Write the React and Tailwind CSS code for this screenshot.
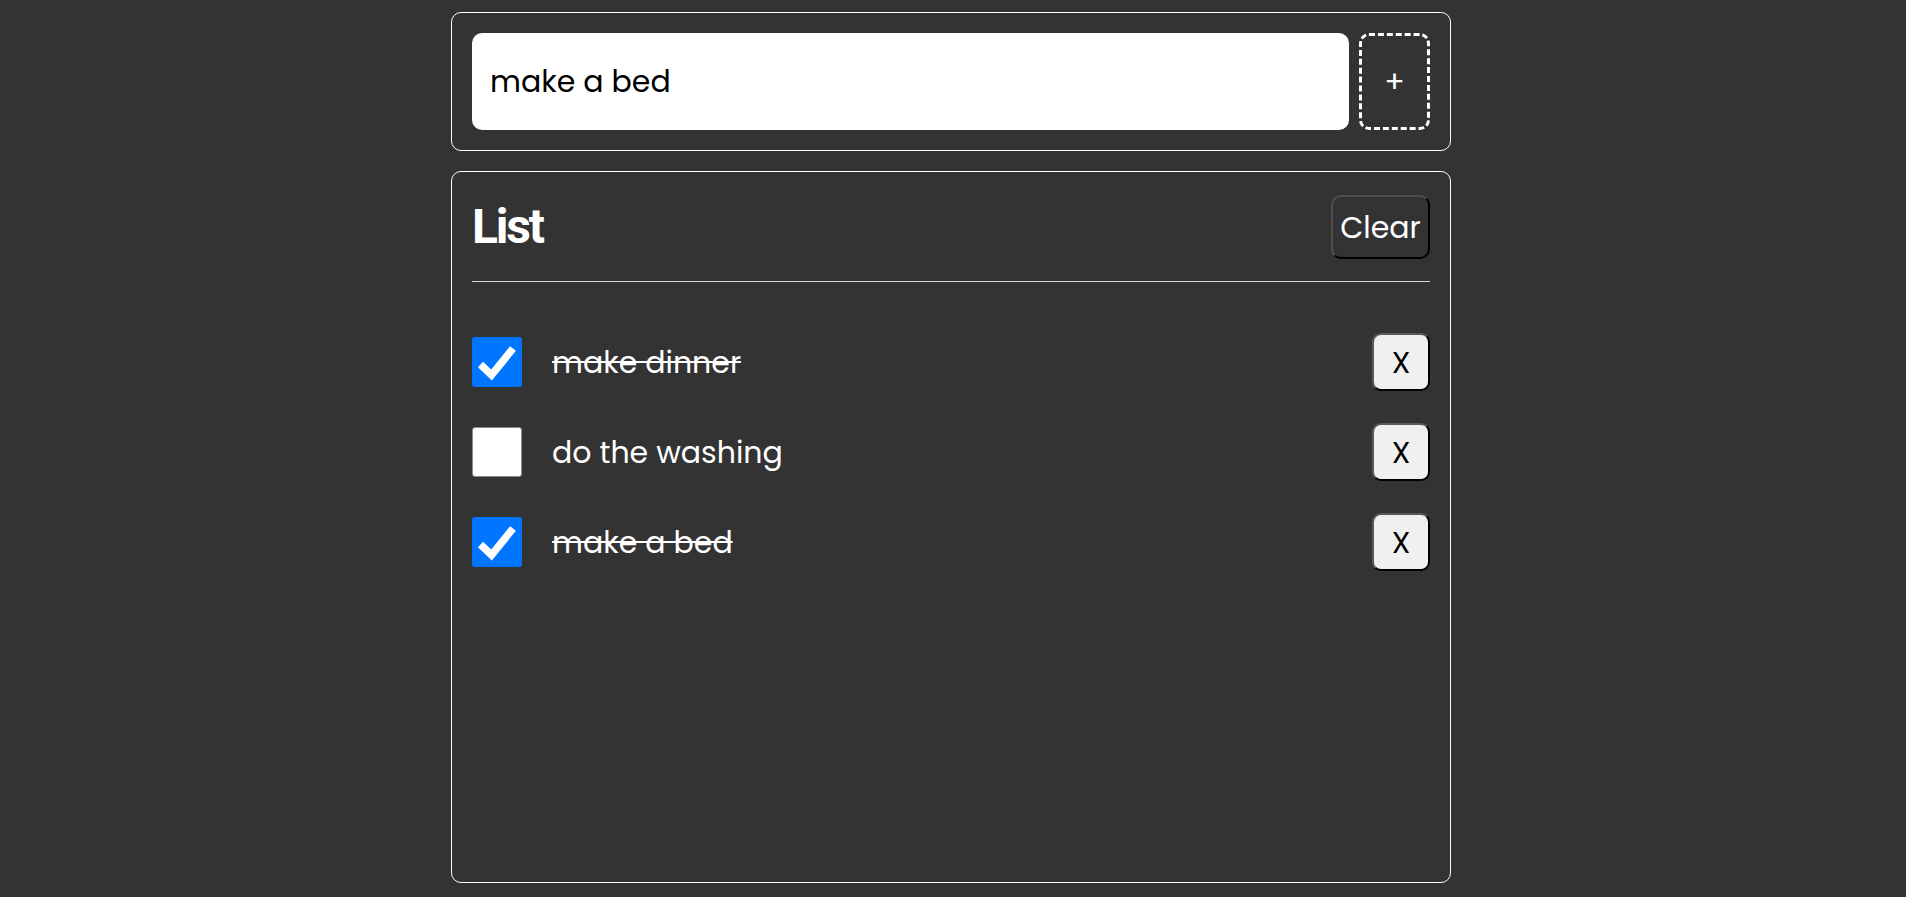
import React from "react";

const items = [
  { text: "make dinner", done: true },
  { text: "do the washing", done: false },
  { text: "make a bed", done: true },
];

function Check({ done }) {
  if (!done) {
    return (
      <div className="w-[50px] h-[50px] shrink-0 rounded-[3px] bg-white border border-[#8a8a8a]" />
    );
  }
  return (
    <div className="w-[50px] h-[50px] shrink-0 rounded-[3px] bg-[#0075ff] flex items-center justify-center">
      <svg width="50" height="50" viewBox="0 0 50 50">
        <path d="M8.5 27.5 L19.5 38 L41 11.5" fill="none" stroke="white" strokeWidth="7.5" strokeLinejoin="miter" />
      </svg>
    </div>
  );
}

export default function App() {
  return (
    <div
      className="min-h-screen w-full bg-[#333333] pt-3 pr-1 flex flex-col items-center"
      style={{ fontFamily: '"Poppins", "Open Sans", sans-serif' }}
    >
      <div className="w-[1000px] rounded-[10px] border border-white p-5 flex gap-[10px]">
        <input
          readOnly
          value="make a bed"
          className="flex-1 h-[97px] rounded-[10px] bg-white pl-[18px] text-black text-[30px] outline-none"
        />
        <button className="w-[71px] h-[97px] shrink-0 rounded-[10px] border-[3px] border-dashed border-white text-white text-[30px] flex items-center justify-center">
          +
        </button>
      </div>

      <div className="mt-5 w-[1000px] h-[712px] rounded-[10px] border border-white px-5 pt-[23px]">
        <div className="flex items-center justify-between h-[64px]">
          <h2
            className="text-white text-[48px] font-bold leading-none tracking-[-0.045em]"
            style={{ fontFamily: 'Roboto, sans-serif' }}
          >
            List
          </h2>
          <button className="w-[99px] h-[64px] rounded-[10px] border-2 border-t-[#4e4e4e] border-l-[#4e4e4e] border-r-black border-b-black bg-[#333333] text-white text-[30px] flex items-center justify-center">
            Clear
          </button>
        </div>
        <div className="mt-[22px] h-px bg-[#d4d4d4]" />
        <div className="mt-[51px] flex flex-col gap-[32px]">
          {items.map((it) => (
            <div key={it.text} className="flex items-center h-[58px]">
              <Check done={it.done} />
              <span
                className={
                  "ml-[30px] text-white text-[30px] " +
                  (it.done ? "line-through decoration-2" : "")
                }
              >
                {it.text}
              </span>
              <button className="ml-auto w-[58px] h-[58px] rounded-[9px] border-2 border-t-[#5a5a5a] border-l-[#5a5a5a] border-r-black border-b-black bg-[#f0f0f0] text-black text-[30px] flex items-center justify-center">
                X
              </button>
            </div>
          ))}
        </div>
      </div>
    </div>
  );
}
